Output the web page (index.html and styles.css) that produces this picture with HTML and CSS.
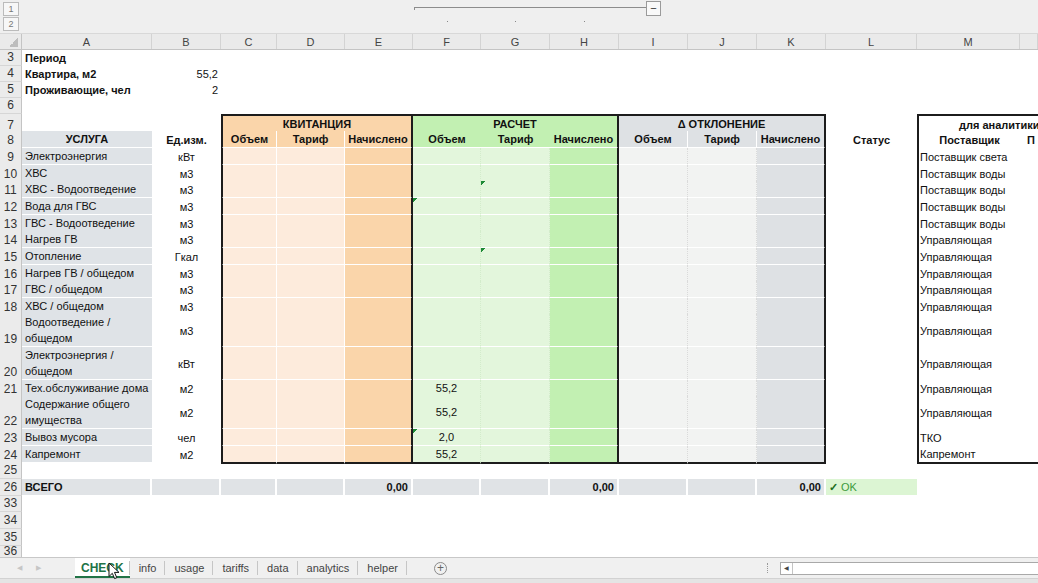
FILE: index.html
```html
<!DOCTYPE html>
<html>
<head>
    <meta charset="utf-8" />
    <title>CHECK</title>
    <link rel="stylesheet" href="styles.css">
</head>
<body>
    <div class="cols outline">
        <div class="lvl">1</div>
        <div class="group"><div class="group-line"></div><div class="collapse">&minus;</div></div>
        <div class="lvl lvl2">2</div>
        <div class="dot dotF"></div>
        <div class="dot dotG"></div>
        <div class="dot dotH"></div>
    </div>

    <div class="cols colhead">
        <div class="corner"></div>
        <div>A</div><div>B</div><div>C</div><div>D</div><div>E</div><div>F</div><div>G</div>
        <div>H</div><div>I</div><div>J</div><div>K</div><div>L</div><div>M</div><div></div>
    </div>

    <div class="cols r h16">
        <div class="n">3</div><div class="c b">Период</div>
    </div>
    <div class="cols r h16">
        <div class="n">4</div><div class="c b">Квартира, м2</div><div class="c rt">55,2</div>
    </div>
    <div class="cols r h16">
        <div class="n">5</div><div class="c b">Проживающие, чел</div><div class="c rt">2</div>
    </div>
    <div class="cols r h16">
        <div class="n">6</div>
    </div>

    <div class="cols r">
        <div class="n">7</div>
        <div class="c"></div>
        <div class="c"></div>
        <div class="c b ctr o2 tl tt tr span3">КВИТАНЦИЯ</div>
        <div class="c b ctr g2 tt tr span3">РАСЧЕТ</div>
        <div class="c b ctr d2 tt tr span3">&Delta; ОТКЛОНЕНИЕ</div>
        <div class="c"></div>
        <div class="c b tl tt span2 analytics">для аналитики</div>
    </div>
    <div class="cols r">
        <div class="n">8</div>
        <div class="c b ctr lab">УСЛУГА</div>
        <div class="c b ctr">Ед.изм.</div>
        <div class="c b ctr o2 tl">Объем</div>
        <div class="c b ctr o2">Тариф</div>
        <div class="c b ctr o2 tr">Начислено</div>
        <div class="c b ctr g2 nosep">Объем</div>
        <div class="c b ctr g2 nosep">Тариф</div>
        <div class="c b ctr g2 tr">Начислено</div>
        <div class="c b ctr d2">Объем</div>
        <div class="c b ctr d2">Тариф</div>
        <div class="c b ctr d2 tr">Начислено</div>
        <div class="c b ctr">Статус</div>
        <div class="c b ctr tl">Поставщик</div>
        <div class="c b cut">П</div>
    </div>

    <div class="cols r">
        <div class="n">9</div><div class="c lab">Электроэнергия</div><div class="c ctr">кВт</div>
        <div class="c o1 tl"></div><div class="c o1"></div><div class="c o2 tr"></div>
        <div class="c g1"></div><div class="c g1"></div><div class="c g2 tr"></div>
        <div class="c d1"></div><div class="c d1"></div><div class="c d2 tr"></div>
        <div class="c"></div><div class="c tl sup">Поставщик света</div><div class="c"></div>
    </div>
    <div class="cols r h16">
        <div class="n">10</div><div class="c lab">ХВС</div><div class="c ctr">м3</div>
        <div class="c o1 tl"></div><div class="c o1"></div><div class="c o2 tr"></div>
        <div class="c g1"></div><div class="c g1"></div><div class="c g2 tr"></div>
        <div class="c d1"></div><div class="c d1"></div><div class="c d2 tr"></div>
        <div class="c"></div><div class="c tl sup">Поставщик воды</div><div class="c"></div>
    </div>
    <div class="cols r">
        <div class="n">11</div><div class="c lab">ХВС - Водоотведение</div><div class="c ctr">м3</div>
        <div class="c o1 tl"></div><div class="c o1"></div><div class="c o2 tr"></div>
        <div class="c g1"></div><div class="c g1 flag"></div><div class="c g2 tr"></div>
        <div class="c d1"></div><div class="c d1"></div><div class="c d2 tr"></div>
        <div class="c"></div><div class="c tl sup">Поставщик воды</div><div class="c"></div>
    </div>
    <div class="cols r">
        <div class="n">12</div><div class="c lab">Вода для ГВС</div><div class="c ctr">м3</div>
        <div class="c o1 tl"></div><div class="c o1"></div><div class="c o2 tr"></div>
        <div class="c g1 flag"></div><div class="c g1"></div><div class="c g2 tr"></div>
        <div class="c d1"></div><div class="c d1"></div><div class="c d2 tr"></div>
        <div class="c"></div><div class="c tl sup">Поставщик воды</div><div class="c"></div>
    </div>
    <div class="cols r h16">
        <div class="n">13</div><div class="c lab">ГВС - Водоотведение</div><div class="c ctr">м3</div>
        <div class="c o1 tl"></div><div class="c o1"></div><div class="c o2 tr"></div>
        <div class="c g1"></div><div class="c g1"></div><div class="c g2 tr"></div>
        <div class="c d1"></div><div class="c d1"></div><div class="c d2 tr"></div>
        <div class="c"></div><div class="c tl sup">Поставщик воды</div><div class="c"></div>
    </div>
    <div class="cols r">
        <div class="n">14</div><div class="c lab">Нагрев ГВ</div><div class="c ctr">м3</div>
        <div class="c o1 tl"></div><div class="c o1"></div><div class="c o2 tr"></div>
        <div class="c g1"></div><div class="c g1"></div><div class="c g2 tr"></div>
        <div class="c d1"></div><div class="c d1"></div><div class="c d2 tr"></div>
        <div class="c"></div><div class="c tl sup">Управляющая</div><div class="c"></div>
    </div>
    <div class="cols r">
        <div class="n">15</div><div class="c lab">Отопление</div><div class="c ctr">Гкал</div>
        <div class="c o1 tl"></div><div class="c o1"></div><div class="c o2 tr"></div>
        <div class="c g1"></div><div class="c g1 flag"></div><div class="c g2 tr"></div>
        <div class="c d1"></div><div class="c d1"></div><div class="c d2 tr"></div>
        <div class="c"></div><div class="c tl sup">Управляющая</div><div class="c"></div>
    </div>
    <div class="cols r h16">
        <div class="n">16</div><div class="c lab">Нагрев ГВ / общедом</div><div class="c ctr">м3</div>
        <div class="c o1 tl"></div><div class="c o1"></div><div class="c o2 tr"></div>
        <div class="c g1"></div><div class="c g1"></div><div class="c g2 tr"></div>
        <div class="c d1"></div><div class="c d1"></div><div class="c d2 tr"></div>
        <div class="c"></div><div class="c tl sup">Управляющая</div><div class="c"></div>
    </div>
    <div class="cols r">
        <div class="n">17</div><div class="c lab">ГВС / общедом</div><div class="c ctr">м3</div>
        <div class="c o1 tl"></div><div class="c o1"></div><div class="c o2 tr"></div>
        <div class="c g1"></div><div class="c g1"></div><div class="c g2 tr"></div>
        <div class="c d1"></div><div class="c d1"></div><div class="c d2 tr"></div>
        <div class="c"></div><div class="c tl sup">Управляющая</div><div class="c"></div>
    </div>
    <div class="cols r h16">
        <div class="n">18</div><div class="c lab">ХВС / общедом</div><div class="c ctr">м3</div>
        <div class="c o1 tl"></div><div class="c o1"></div><div class="c o2 tr"></div>
        <div class="c g1"></div><div class="c g1"></div><div class="c g2 tr"></div>
        <div class="c d1"></div><div class="c d1"></div><div class="c d2 tr"></div>
        <div class="c"></div><div class="c tl sup">Управляющая</div><div class="c"></div>
    </div>
    <div class="cols r h33">
        <div class="n">19</div><div class="c lab wrap"><span>Водоотведение /<br>общедом</span></div><div class="c ctr">м3</div>
        <div class="c o1 tl"></div><div class="c o1"></div><div class="c o2 tr"></div>
        <div class="c g1"></div><div class="c g1"></div><div class="c g2 tr"></div>
        <div class="c d1"></div><div class="c d1"></div><div class="c d2 tr"></div>
        <div class="c"></div><div class="c tl sup">Управляющая</div><div class="c"></div>
    </div>
    <div class="cols r h33">
        <div class="n">20</div><div class="c lab wrap"><span>Электроэнергия /<br>общедом</span></div><div class="c ctr">кВт</div>
        <div class="c o1 tl"></div><div class="c o1"></div><div class="c o2 tr"></div>
        <div class="c g1"></div><div class="c g1"></div><div class="c g2 tr"></div>
        <div class="c d1"></div><div class="c d1"></div><div class="c d2 tr"></div>
        <div class="c"></div><div class="c tl sup">Управляющая</div><div class="c"></div>
    </div>
    <div class="cols r h16">
        <div class="n">21</div><div class="c lab">Тех.обслуживание дома</div><div class="c ctr">м2</div>
        <div class="c o1 tl"></div><div class="c o1"></div><div class="c o2 tr"></div>
        <div class="c g1 ctr">55,2</div><div class="c g1"></div><div class="c g2 tr"></div>
        <div class="c d1"></div><div class="c d1"></div><div class="c d2 tr"></div>
        <div class="c"></div><div class="c tl sup">Управляющая</div><div class="c"></div>
    </div>
    <div class="cols r h33">
        <div class="n">22</div><div class="c lab wrap"><span>Содержание общего<br>имущества</span></div><div class="c ctr">м2</div>
        <div class="c o1 tl"></div><div class="c o1"></div><div class="c o2 tr"></div>
        <div class="c g1 ctr">55,2</div><div class="c g1"></div><div class="c g2 tr"></div>
        <div class="c d1"></div><div class="c d1"></div><div class="c d2 tr"></div>
        <div class="c"></div><div class="c tl sup">Управляющая</div><div class="c"></div>
    </div>
    <div class="cols r">
        <div class="n">23</div><div class="c lab">Вывоз мусора</div><div class="c ctr">чел</div>
        <div class="c o1 tl"></div><div class="c o1"></div><div class="c o2 tr"></div>
        <div class="c g1 ctr flag">2,0</div><div class="c g1"></div><div class="c g2 tr"></div>
        <div class="c d1"></div><div class="c d1"></div><div class="c d2 tr"></div>
        <div class="c"></div><div class="c tl sup">ТКО</div><div class="c"></div>
    </div>
    <div class="cols r h16">
        <div class="n">24</div><div class="c lab">Капремонт</div><div class="c ctr">м2</div>
        <div class="c o1 tl tb"></div><div class="c o1 tb"></div><div class="c o2 tr tb"></div>
        <div class="c g1 ctr tb">55,2</div><div class="c g1 tb"></div><div class="c g2 tr tb"></div>
        <div class="c d1 tb"></div><div class="c d1 tb"></div><div class="c d2 tr tb"></div>
        <div class="c"></div><div class="c tl tb sup">Капремонт</div><div class="c tb"></div>
    </div>

    <div class="cols r">
        <div class="n">25</div>
    </div>
    <div class="cols r">
        <div class="n">26</div>
        <div class="c b tot">ВСЕГО</div>
        <div class="c tot"></div>
        <div class="c tot"></div>
        <div class="c tot"></div>
        <div class="c b rt tot">0,00</div>
        <div class="c tot"></div>
        <div class="c tot"></div>
        <div class="c b rt tot">0,00</div>
        <div class="c tot"></div>
        <div class="c tot"></div>
        <div class="c b rt tot">0,00</div>
        <div class="c ok"><span class="tick">&#10003;</span>&nbsp;OK</div>
    </div>
    <div class="cols r h16"><div class="n">33</div></div>
    <div class="cols r"><div class="n">34</div></div>
    <div class="cols r"><div class="n">35</div></div>
    <div class="cols r h11"><div class="n">36</div></div>

    <div class="tabs">
        <div class="nav"><span>&#9664;</span><span>&#9654;</span></div>
        <div class="tab active">CHECK</div>
        <div class="tab">info</div>
        <div class="tab">usage</div>
        <div class="tab">tariffs</div>
        <div class="tab">data</div>
        <div class="tab">analytics</div>
        <div class="tab">helper</div>
        <div class="add">+</div>
        <div class="split"></div>
        <div class="hscroll"><div class="arrow">&#9664;</div></div>
        <svg class="cursor" width="12" height="18" viewBox="0 0 12 18">
            <path d="M1 1 L1 14.5 L4.3 11.3 L6.6 16.6 L8.8 15.7 L6.5 10.4 L11 10.4 Z" fill="#fff" stroke="#111" stroke-width="1"/>
        </svg>
    </div>
    <div class="status"></div>
</body>
</html>
```

FILE: styles.css
```css
* {
    box-sizing: border-box;
}

body {
    margin: 0;
    width: 1038px;
    height: 583px;
    overflow: hidden;
    background: #fff;
    color: #111;
    font-family: "Liberation Sans", Arial, sans-serif;
    font-size: 11px;
}

/* same column widths as the sheet: row numbers, A..N */
.cols {
    display: grid;
    grid-template-columns: 22px 130px 69px 56px 68px 68px 68px 69px 69px 69px 69px 69px 91px 103px 18px;
}

/* outline (grouping) bar */
.outline {
    height: 33px;
    grid-template-rows: 16px 17px;
    background: #efefef;
}
.lvl {
    grid-column: 1;
    grid-row: 1;
    width: 16px;
    height: 14px;
    margin: 2px 0 0 3px;
    border: 1px solid #bbb;
    background: #f7f7f7;
    color: #777;
    font-size: 9px;
    display: flex;
    align-items: center;
    justify-content: center;
}
.lvl2 {
    grid-row: 2;
    margin-top: 1px;
}
.group {
    grid-column: 7 / 11;
    grid-row: 1;
    display: flex;
    align-items: flex-start;
    padding-left: 1px;
    padding-right: 27px;
}
.group-line {
    flex: 1;
    height: 3px;
    margin-top: 7px;
    border-top: 1px solid #8c8c8c;
    border-left: 1px solid #8c8c8c;
}
.collapse {
    width: 15px;
    height: 15px;
    margin-top: 1px;
    border: 1px solid #9a9a9a;
    background: #f9f9f9;
    color: #333;
    font-size: 11px;
    line-height: 12px;
    text-align: center;
}
.dot {
    grid-row: 2;
    display: flex;
    justify-content: center;
    padding-top: 5px;
}
.dot::before {
    content: "";
    width: 1px;
    height: 1px;
    background: #888;
}
.dotF { grid-column: 7; }
.dotG { grid-column: 8; }
.dotH { grid-column: 9; }

/* column letters */
.colhead {
    height: 17px;
    background: #eaeaea;
    border-top: 1px solid #d8d8d8;
    border-bottom: 1px solid #c4c4c4;
    color: #444;
    font-size: 11px;
}
.colhead div {
    display: flex;
    align-items: center;
    justify-content: center;
    border-right: 1px solid #d3d3d3;
}
.colhead .corner {
    border-right: 1px solid #c4c4c4;
    background: linear-gradient(to top left, #bdbdbd 50%, transparent 50%) right 3px bottom 2px / 9px 9px no-repeat;
}

/* rows */
.r {
    height: 17px;
}
.h16 { height: 16px; }
.h33 { height: 33px; }
.h11 { height: 11px; }

.n {
    display: flex;
    align-items: flex-end;
    justify-content: center;
    background: #ebebeb;
    border-right: 1px solid #c4c4c4;
    border-bottom: 1px solid #d6d6d6;
    color: #333;
    font-size: 12px;
    line-height: 15px;
}
.h11 .n {
    align-items: flex-start;
    line-height: 11px;
    border-bottom: none;
}

.c {
    display: flex;
    align-items: center;
    min-width: 0;
    padding: 0 3px;
    white-space: nowrap;
    line-height: 16px;
}
.b { font-weight: bold; }
.ctr { justify-content: center; text-align: center; }
.rt { justify-content: flex-end; }
.wrap { white-space: normal; }
.span3 { grid-column: span 3; }
.span2 { grid-column: span 2; }
.analytics { padding-left: 40px; }
.sup { padding-left: 1px; }
.cut { padding-left: 7px; }

/* fills */
.lab {
    background-color: #dfe3e7;
    border-bottom: 2px solid #fff;
}
.o1 {
    background-color: #fdebdc;
    border-right: 1px solid #fff;
    border-bottom: 2px solid #fff;
}
.o2 {
    background-color: #fad5aa;
    border-right: 1px solid #fff;
    border-bottom: 2px solid #fff;
}
.g1 {
    background-color: #e3f6dc;
    border-right: 1px dotted #d3eccb;
    border-bottom: 2px solid #fff;
}
.g2 {
    background-color: #c2f0b2;
    border-right: 1px solid #fff;
    border-bottom: 2px solid #fff;
}
.d1 {
    background-color: #f2f3f2;
    border-right: 1px dotted #dadada;
    border-bottom: 2px solid #fff;
}
.d2 {
    background-color: #dee1e4;
    border-right: 1px solid #fff;
    border-bottom: 2px solid #fff;
}
.nosep {
    border-right: none;
}
.tot {
    background-color: #e0e3e6;
    border-right: 2px solid #fff;
    border-bottom: 1px solid #fff;
}
.ok {
    background-color: #dcf5d3;
    color: #3c9a3c;
    border-bottom: 1px solid #fff;
}
.tick {
    color: #1f6f1f;
    font-weight: bold;
}

/* little green error marker in the top-left corner */
.flag {
    background-image: linear-gradient(135deg, #1d8a36 0 3px, transparent 3px);
    background-size: 6px 6px;
    background-repeat: no-repeat;
}

/* thick frame borders */
.tl { border-left: 2px solid #1c1c1c; }
.tr { border-right: 2px solid #1c1c1c; }
.tt { border-top: 2px solid #1c1c1c; }
.tb { border-bottom: 2px solid #1c1c1c; }

/* sheet tabs */
.tabs {
    position: relative;
    display: flex;
    align-items: stretch;
    height: 21px;
    background: #f0f0f0;
    border-top: 1px solid #c8c8c8;
    color: #444;
    font-size: 11px;
}
.nav {
    width: 75px;
    display: flex;
    align-items: center;
    gap: 14px;
    padding-left: 17px;
    color: #c6c6c6;
    font-size: 7px;
}
.tab {
    display: flex;
    align-items: center;
    padding: 0 9px;
    background: linear-gradient(#c6c6c6, #c6c6c6) right center / 1px 14px no-repeat;
}
.tab.active {
    padding: 0 6px;
    background-color: #fff;
    color: #217346;
    font-size: 12px;
    font-weight: bold;
    box-shadow: inset 0 -2px 0 #217346;
}
.add {
    align-self: center;
    width: 13px;
    height: 13px;
    margin-left: 27px;
    border: 1px solid #8a8a8a;
    border-radius: 50%;
    color: #666;
    font-size: 12px;
    line-height: 11px;
    text-align: center;
}
.split {
    align-self: center;
    width: 1px;
    height: 10px;
    margin-left: auto;
    margin-right: 12px;
    border-left: 1px dotted #999;
}
.hscroll {
    align-self: center;
    width: 258px;
    height: 13px;
    border: 1px solid #a9a9a9;
    border-right: none;
    background: #fff;
}
.arrow {
    width: 12px;
    height: 11px;
    border-right: 1px solid #c4c4c4;
    color: #444;
    font-size: 6px;
    line-height: 11px;
    text-align: center;
}
.cursor {
    position: absolute;
    left: 108px;
    top: 4px;
}
.status {
    height: 5px;
    background: #e4e4e4;
    border-top: 1px solid #d2d2d2;
}
```
